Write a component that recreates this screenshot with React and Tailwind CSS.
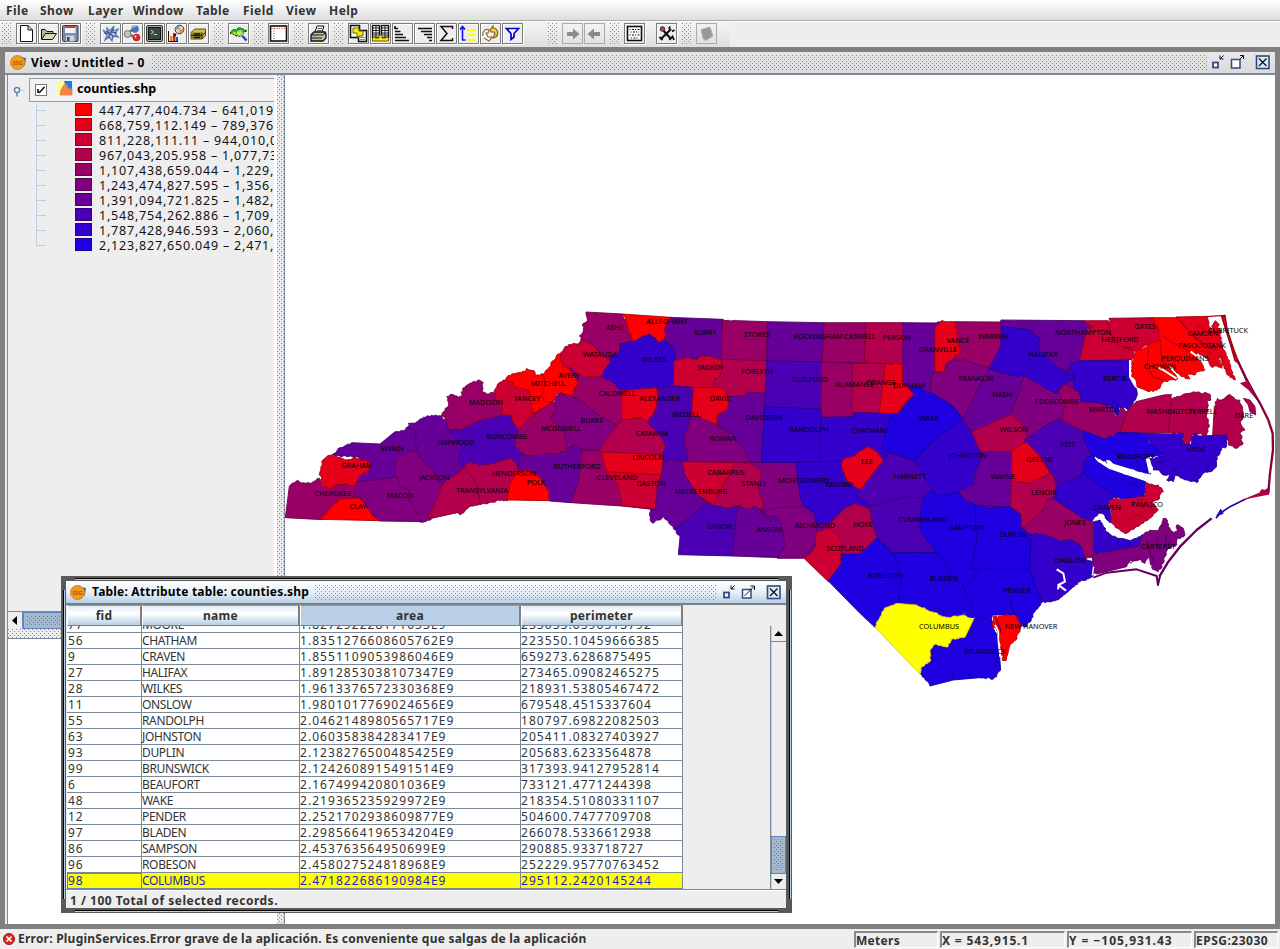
import React from "react";

const FONT = "font-['Noto_Sans',sans-serif]";
const DOTS =
  "bg-[conic-gradient(from_270deg_at_1px_1px,#8a8a8a_25%,transparent_0),conic-gradient(from_270deg_at_1px_1px,#8a8a8a_25%,transparent_0)] bg-[length:4px_4px] bg-[position:0_0,2px_2px]";
const BLUE_DOTS =
  "bg-[conic-gradient(from_270deg_at_1px_1px,#6382bf_25%,transparent_0),conic-gradient(from_270deg_at_1px_1px,#6382bf_25%,transparent_0)] bg-[length:4px_4px] bg-[position:0_0,2px_2px]";

/* ---------- map data: coordinates are in thirds of a pixel, one block per 250px wide column ---------- */
const FILL = ["#ff0000", "#e6001a", "#cc0033", "#b3004c", "#990066", "#800080", "#660099", "#4c00b3", "#3300cc", "#1f00e0", "#ffff00"];
const LINE = ["#a80000", "#98000f", "#8a0022", "#770033", "#660044", "#550055", "#440066", "#330077", "#220088", "#120096", "#d0c800"];

const COUNTIES = [
  // column 0
  [0, 6, "155,466 180,443 215,428 300,432 345,395 370,392 385,380 408,385 405,410 412,450 380,470 355,490 352,530 300,542 233,546 225,530 260,508 262,487 230,470 200,470"],
  [0, 4, "16,653 28,558 52,541 62,549 95,549 118,535 130,560 218,550 235,558 232,600 180,605 150,630 126,659"],
  [0, 1, "120,515 128,480 150,466 175,472 200,480 230,475 265,485 272,492 268,508 245,525 232,535 232,555 215,556 185,552 160,560 145,565 128,555 125,535 118,525"],
  [0, 6, "385,380 385,370 405,370 430,352 455,346 485,348 500,365 508,390 550,440 540,480 555,500 520,530 492,555 465,525 435,495 415,465 405,430 410,395"],
  [0, 5, "345,478 380,460 400,452 415,460 435,490 460,515 478,545 494,552 475,590 468,615 448,645 455,657 425,667 408,660 380,600 375,570 350,558 346,530 348,500"],
  [0, 5, "230,545 300,538 352,530 360,560 388,570 390,600 408,630 425,665 297,663 262,625 245,594 220,590"],
  [0, 0, "122,658 150,627 180,597 240,594 262,625 295,662"],
  [0, 7, "508,390 540,388 580,372 640,345 690,340 700,370 722,388 720,415 715,435 740,458 732,470 724,485 710,495 690,480 640,495 605,500 570,490 552,500 535,480 545,440"],
  [0, 4, "485,348 490,335 505,318 500,290 515,283 535,292 545,290 548,265 570,250 598,240 610,248 605,275 620,282 648,275 660,300 670,330 670,345 600,362 545,388 508,390 497,360"],
  [0, 2, "642,275 655,250 680,235 710,258 750,265 750,285 765,340 752,355 735,375 715,390 700,370 692,345 668,345 665,320 650,300"],
  [0, 3, "490,550 520,530 552,503 580,530 595,550 602,610 575,618 555,632 540,645 532,638 450,656 445,645 470,600 475,580"],
  [0, 3, "552,500 570,486 605,496 640,490 690,475 710,490 720,515 695,545 683,602 665,600 650,602 620,612 600,614 590,550"],
  // column 1
  [1, 6, "-38,465 0,465 45,460 60,462 110,450 135,435 158,450 155,500 150,540 123,608 58,603 58,575 -10,510 -38,510 -30,490"],
  [0, 0, "712,515 730,512 750,512 778,530 808,578 808,602 680,600 690,550"],
  [1, 0, "-72,235 -55,222 -15,215 -10,205 5,211 12,212 16,228 40,222 48,250 45,290 55,303 70,300 60,318 30,328 8,342 6,300 -5,270 -40,262"],
  [1, 4, "-42,415 -35,390 8,345 70,305 92,320 88,340 68,352 85,372 105,395 115,447 85,462 50,460 0,468 -20,460 -45,440"],
  [1, 4, "155,452 213,450 235,515 240,525 265,550 275,575 273,618 123,608 145,545 150,500"],
  [1, 2, "232,510 395,520 388,545 378,628 273,618 270,580 262,550 240,535"],
  [1, 1, "213,450 400,460 395,525 230,515"],
  [1, 5, "85,278 120,286 150,300 200,340 265,376 245,400 212,453 175,450 150,445 135,435 110,447 105,400 60,352 80,335 72,300"],
  [1, 4, "145,222 212,225 250,240 280,268 280,360 262,376 250,370 200,340 150,300 122,285 143,245"],
  [1, 0, "40,222 55,205 80,165 92,160 98,190 115,205 125,220 145,245 125,285 110,285 90,275 75,290 68,305 45,305 35,290 45,255"],
  [1, 2, "92,158 105,140 130,130 148,135 152,118 175,120 195,135 205,150 240,180 245,190 215,230 180,230 145,226 125,205 100,200 92,180"],
  [1, 4, "168,36 278,42 295,75 314,125 275,132 270,155 240,180 200,150 190,135 155,118 148,108 158,98 160,70 172,62"],
  [1, 6, "415,52 578,58 576,180 540,172 525,180 500,175 470,177 432,188 425,145 400,120 398,88"],
  [1, 0, "278,42 422,52 402,85 408,105 388,132 360,106 340,109 310,129 295,85"],
  [1, 8, "270,130 310,125 340,108 360,103 388,128 405,120 432,145 434,185 430,260 380,268 275,275 250,245 212,230 240,190 240,175 270,155"],
  [1, 4, "578,58 625,62 712,65 712,182 573,180"],
  [1, 3, "573,178 712,182 705,285 650,280 648,290 600,295 585,275 552,262 552,240 570,225"],
  [1, 2, "432,185 470,172 500,180 515,170 540,168 573,180 577,205 570,230 552,240 550,264 430,260"],
  [1, 3, "275,360 335,352 352,365 390,400 412,440 408,465 213,455 207,453 240,400 262,376"],
  [1, 7, "380,263 430,258 490,262 490,300 490,345 483,370 467,410 473,445 477,482 440,482 420,478 400,492 400,460 410,440 390,405 352,367 375,330 387,295"],
  [1, 1, "275,272 380,263 385,290 375,330 352,367 335,352 275,360"],
  [1, 6, "597,290 650,287 652,276 705,280 702,330 698,487 650,487 640,455 605,415 595,400 565,385 555,360 585,330"],
  [1, 1, "490,262 552,262 570,262 585,270 595,300 590,330 560,350 560,378 530,368 485,350"],
  [1, 5, "485,348 530,360 555,375 605,400 615,415 640,445 658,487 473,485 468,445 462,410 478,370"],
  [1, 5, "655,487 797,487 815,555 825,595 805,625 780,625 700,642 690,625 690,600 680,570 685,535 680,510"],
  [1, 3, "615,488 658,488 690,510 692,535 685,570 700,600 697,632 678,624 650,632 628,616 610,624 585,626 545,615"],
  [1, 2, "455,485 618,488 548,614 500,584 462,535"],
  [1, 6, "400,490 420,478 458,487 464,525 500,580 532,610 490,642 435,690 402,650 370,670 360,660 362,630 378,628 380,580 385,545 395,525"],
  [1, 7, "435,688 490,642 530,608 548,615 590,625 624,618 609,768 445,764 450,712"],
  // column 2
  [2, 5, "-60,635 0,622 35,620 80,622 112,640 116,670 110,700 100,740 75,775 -8,775 5,735 -5,680 -20,650"],
  [1, 6, "622,618 650,630 678,620 700,640 715,655 740,648 755,675 765,735 745,773 607,768"],
  [2, 6, "-38,65 132,68 129,188 -40,184"],
  [2, 7, "-40,182 127,186 124,329 -46,320"],
  [2, 4, "132,68 257,68 255,189 127,187"],
  [2, 3, "257,68 371,68 370,192 253,188"],
  [2, 6, "369,68 470,70 484,62 468,85 468,215 458,245 456,278 400,266 368,262"],
  [2, 4, "523,65 664,66 665,140 636,204 600,204 540,185 525,180 535,160 530,110"],
  [2, 5, "460,215 492,215 505,190 530,180 560,182 600,198 630,203 605,255 552,358 530,334 500,309 452,279 452,245"],
  [2, 1, "482,65 525,65 532,110 540,160 500,190 492,215 470,218 464,210 465,85"],
  [2, 4, "125,187 219,189 217,345 222,352 122,352"],
  [2, 3, "217,189 319,191 300,342 222,342 215,330"],
  [2, 8, "-46,320 124,327 120,487 -56,487"],
  [2, 8, "122,352 222,350 225,338 336,340 309,447 332,460 314,482 262,450 240,460 235,475 190,488 118,485"],
  [2, 8, "47,487 188,483 198,510 210,545 245,570 232,585 272,615 255,626 220,614 190,634 145,672 105,669 104,640 74,620 60,590"],
  [2, 7, "268,612 310,605 370,586 435,592 428,640 426,690 470,757 335,758 320,740 290,715 272,650"],
  [2, 7, "328,458 407,482 460,555 460,568 430,595 372,591 310,609 268,617 228,585 240,570"],
  [2, 1, "190,480 230,462 262,438 290,455 310,480 240,570 205,545 185,500"],
  [2, 8, "403,482 480,405 548,358 565,385 584,400 600,450 610,470 590,520 588,552 540,578 475,592 453,562"],
  [2, 9, "335,340 360,335 400,290 385,260 410,262 452,278 500,305 530,330 548,360 480,405 403,482 305,447"],
  [2, 1, "317,191 368,191 368,258 385,260 400,285 365,320 355,340 297,340"],
  [2, 6, "627,203 660,220 738,226 728,270 702,345 575,397 548,360 600,255"],
  [2, 6, "600,453 697,453 694,622 620,617 585,617 550,602 535,573 583,552 585,520 605,470"],
  [2, 3, "268,625 272,650 290,715 240,764 185,764 180,730 150,690 145,675 190,630 220,610"],
  [2, 2, "145,683 175,705 185,730 182,765 185,790 150,840 145,845 72,775 95,755 108,735 108,700"],
  // column 3
  [3, 6, "-87,60 160,62 192,80 175,90 152,182 120,200 115,212 78,205 20,155 25,118 0,95 -86,80"],
  [3, 5, "-15,222 0,230 80,275 90,270 109,310 102,360 60,372 0,412 -6,415 -40,375 -58,340 -30,270"],
  [3, 8, "-86,78 0,90 30,115 25,150 80,200 135,230 95,255 80,282 0,237 -15,227 -40,230 -123,205 -88,140"],
  [3, 3, "-175,395 -55,342 -30,365 -5,415 -50,456 -150,453"],
  [3, 7, "98,358 140,373 164,395 169,420 187,465 164,500 155,530 110,552 85,557 65,522 50,490 -8,445 -15,417 0,410 60,368"],
  [3, 1, "-55,453 -12,425 30,470 60,520 30,538 -5,552 -55,545"],
  [3, 3, "-57,543 -5,550 30,535 65,520 78,555 78,592 54,600 49,627 0,677 -25,688 -30,640 -58,622"],
  [3, 4, "50,597 70,592 160,650 187,660 189,758 205,755 210,765 165,778 155,745 120,722 95,729 45,709 0,704 -28,690 45,625"],
  [3, 2, "160,62 235,62 250,90 270,130 310,150 313,158 305,182 148,184 170,90 190,82"],
  [3, 2, "237,55 370,53 385,85 395,122 355,135 318,155 265,135 238,95"],
  [3, 4, "105,255 145,270 155,303 210,306 250,330 260,350 272,320 292,335 288,365 272,399 225,420 160,394 96,360 103,310 85,272"],
  [3, 8, "148,182 302,180 300,230 320,270 318,295 295,330 285,322 270,322 262,350 250,325 210,308 155,305 145,272 135,272 130,245 135,225 115,210 120,195"],
  [3, 3, "292,332 318,305 400,285 425,283 427,310 417,398 270,397"],
  [3, 3, "425,298 460,283 500,277 540,283 543,300 530,300 535,330 530,345 538,375 530,405 490,400 480,435 455,435 460,400 415,398"],
  [3, 3, "553,320 562,295 575,300 590,288 600,283 615,300 630,300 640,350 632,370 645,390 630,400 640,430 620,445 595,435 590,408 548,405"],
  [3, 8, "345,400 430,402 460,400 455,435 480,435 490,400 505,408 590,405 590,440 575,445 570,460 560,470 560,495 545,515 520,520 500,548 470,540 435,525 430,545 410,540 420,522 400,525 385,510 370,510 360,475 395,472 395,460 370,445"],
  [3, 9, "160,392 225,418 270,397 345,400 355,425 395,460 395,472 375,468 350,475 355,500 362,522 330,515 300,505 250,490 240,480 215,482 185,465 165,425"],
  [3, 9, "160,495 175,470 190,467 210,490 250,508 290,525 347,545 345,590 270,597 240,580 160,525"],
  [3, 8, "78,560 125,540 160,522 258,592 235,605 245,660 240,668 215,640 205,640 185,662 160,655 70,595"],
  [3, 8, "190,665 210,660 230,695 265,715 320,715 335,705 338,720 325,740 270,755 190,758"],
  [3, 2, "347,550 365,552 385,555 400,575 388,588 385,600 365,605 385,630 360,655 330,675 290,700 275,695 245,670 245,640 235,610 260,590 270,600 345,588"],
  [3, 5, "187,765 200,762 325,738 335,705 360,690 385,692 400,655 412,660 415,680 430,700 440,695 440,675 460,685 465,705 440,720 440,735 415,745 405,770 400,790 385,815 368,808 355,775 345,790 330,780 300,782 290,800 200,822 190,820"],
  [3, 8, "0,703 45,705 95,725 120,718 155,740 165,775 187,785 188,830 150,845 110,878 80,900 45,908 30,905 -5,810"],
  [3, 1, "438,51 533,49 536,78 552,90 572,93 572,120 582,150 592,170 602,200 616,240 592,225 578,195 566,165 575,205 560,198 545,202 530,175 505,160 485,155 460,110"],
  [3, 0, "365,53 440,53 475,90 500,120 545,160 500,150 500,165 512,180 525,210 505,215 490,225 475,220 480,237 455,230 430,205 395,185 390,122 385,85"],
  [3, 0, "355,133 390,122 395,180 420,205 443,237 400,245 390,265 370,275 345,270 320,260 318,240 305,230 305,190 318,155 340,145"],
  // southern block
  [2, 9, "430,592 455,565 475,590 535,575 550,600 590,615 590,710 578,805 603,810 558,872 500,800 468,757 420,690 422,640"],
  [2, 9, "585,615 630,625 690,620 722,645 722,685 752,703 750,810 640,809 573,807 590,730"],
  [2, 9, "600,808 748,808 785,905 765,935 740,980 725,975 705,945 640,945 635,960 600,955 545,950 576,915 553,890 553,870"],
  [2, 9, "335,758 470,757 500,800 530,835 555,870 557,890 578,915 545,952 500,956 440,930 410,917 350,913 347,880 360,825 342,780"],
  [2, 9, "290,715 320,740 340,765 355,805 367,825 355,900 350,913 320,922 300,950 285,982 240,940 145,843 185,790 185,762 240,762"],
  [2, 9, "580,960 600,952 635,960 645,995 655,1020 662,1110 655,1115 650,1130 640,1137 600,1133 520,1140 450,1158 422,1122 425,1100 450,1085 452,1050 465,1032 500,1042 515,1018 555,1012"],
  [2, 10, "350,910 410,915 455,935 500,952 550,945 580,960 555,1012 515,1018 500,1042 465,1032 450,1050 450,1085 425,1100 420,1122 285,982 300,950 318,922"],
  [2, 0, "640,950 665,948 705,945 725,980 715,1000 708,1020 690,1035 685,1055 678,1082 668,1082 662,1040 655,1010 650,990 636,975"],
];

const SILHOUETTE = [
  [6, "130,560 300,432 510,360 700,300 830,330 860,170 930,90 1500,70 2400,66 2550,180 2500,260 2420,560 2420,670 2280,880 2100,930 1880,900 1760,830 1600,770 1250,765 1200,640 880,600 700,590 300,655 150,655"],
];

function rough(points, shift) {
  const p = points.split(" ").map((s) => s.split(",").map(Number)).map(([x, y]) => [x + shift, y]);
  const out = [];
  p.forEach((a, i) => {
    const b = p[(i + 1) % p.length];
    const dx = b[0] - a[0];
    const dy = b[1] - a[1];
    const len = Math.hypot(dx, dy);
    out.push(a);
    if (len > 8 && len < 52) {
      const n = Math.max(2, Math.round(len / 6));
      for (let k = 1; k < n; k++) {
        const x = a[0] + (dx * k) / n;
        const y = a[1] + (dy * k) / n;
        const h = Math.sin(Math.round(x / 4) * 12.9898 + Math.round(y / 4) * 78.233) * 43758.5453;
        const r = (h - Math.floor(h) - 0.5) * 6;
        out.push([x - (dy / len) * r, y + (dx / len) * r]);
      }
    }
  });
  return out.map(([x, y]) => x.toFixed(1) + "," + y.toFixed(1)).join(" ");
}

const LABELS = [
  ["CHEROKEE", 333, 496], ["GRAHAM", 357, 468], ["CLAY", 358, 509], ["SWAIN", 392, 451], ["MACON", 400, 498], ["JACKSON", 434, 480],
  ["HAYWOOD", 456, 445], ["MADISON", 486, 405], ["BUNCOMBE", 507, 439], ["HENDERSON", 514, 476], ["TRANSYLVANIA", 482, 493], ["POLK", 536, 485],
  ["YANCEY", 527, 401], ["MITCHELL", 548, 386], ["AVERY", 569, 378], ["WATAUGA", 600, 357], ["ASHE", 615, 330], ["ALLEGHANY", 667, 324],
  ["SURRY", 705, 335], ["WILKES", 654, 362], ["STOKES", 757, 337], ["YADKIN", 710, 370], ["FORSYTH", 757, 374], ["CALDWELL", 617, 396],
  ["ALEXANDER", 660, 401], ["DAVIE", 720, 401], ["BURKE", 592, 423], ["IREDELL", 686, 417], ["MCDOWELL", 561, 431], ["CATAWBA", 652, 436],
  ["ROWAN", 723, 441], ["DAVIDSON", 764, 420], ["RUTHERFORD", 577, 469], ["LINCOLN", 648, 460], ["CLEVELAND", 617, 480], ["GASTON", 651, 486],
  ["CABARRUS", 726, 475], ["STANLY", 754, 486], ["MECKLENBURG", 701, 494], ["UNION", 720, 529], ["ANSON", 769, 532], ["ROCKINGHAM", 818, 339],
  ["CASWELL", 860, 339], ["PERSON", 897, 340], ["GRANVILLE", 938, 352], ["VANCE", 958, 343], ["WARREN", 993, 339], ["GUILFORD", 810, 382],
  ["ALAMANCE", 855, 387], ["ORANGE", 881, 385], ["DURHAM", 909, 388], ["FRANKLIN", 976, 381], ["NASH", 1002, 397], ["RANDOLPH", 809, 432],
  ["CHATHAM", 869, 433], ["WAKE", 929, 421], ["WILSON", 1014, 432], ["JOHNSTON", 968, 458], ["LEE", 867, 464], ["MONTGOMERY", 804, 483],
  ["MOORE", 839, 487], ["HARNETT", 910, 479], ["WAYNE", 1003, 479], ["RICHMOND", 815, 528], ["HOKE", 863, 527], ["CUMBERLAND", 923, 522],
  ["SAMPSON", 967, 530], ["DUPLIN", 1013, 537], ["SCOTLAND", 845, 551], ["ROBESON", 885, 578], ["BLADEN", 944, 581], ["PENDER", 1017, 593],
  ["COLUMBUS", 939, 629], ["BRUNSWICK", 985, 654], ["NEW HANOVER", 1031, 629], ["ONSLOW", 1070, 563], ["NORTHAMPTON", 1083, 335],
  ["HERTFORD", 1120, 342], ["GATES", 1145, 329], ["HALIFAX", 1043, 357], ["BERTIE", 1115, 381], ["CHOWAN", 1160, 369], ["PERQUIMANS", 1185, 361],
  ["PASQUOTANK", 1202, 348], ["CAMDEN", 1203, 336], ["CURRITUCK", 1228, 333], ["EDGECOMBE", 1057, 404], ["MARTIN", 1103, 412],
  ["WASHINGTON", 1171, 414], ["TYRRELL", 1203, 414], ["DARE", 1244, 418], ["PITT", 1068, 447], ["GREENE", 1040, 462], ["BEAUFORT", 1136, 459],
  ["HYDE", 1196, 452], ["LENOIR", 1044, 495], ["CRAVEN", 1107, 510], ["PAMLICO", 1147, 507], ["JONES", 1075, 525], ["CARTERET", 1158, 549],
];

function CountyMap() {
  return (
    <svg className="block" width="989" height="848" viewBox="285 75 989 848">
      <g transform="translate(280 300) scale(0.33333)" strokeWidth="2.6">
        {SILHOUETTE.map(([c, pts]) => (
          <polygon key={c} points={pts} fill={FILL[c]} />
        ))}
        {COUNTIES.map(([col, c, pts], i) => (
          <polygon key={i} points={rough(pts, col * 750)} fill={FILL[c]} stroke={LINE[c]} />
        ))}
        <g transform="translate(2250 0)" fill="none" strokeLinejoin="round">
          <path d="M528 50L585 46" stroke="#b80018" strokeWidth="4" />
          <path d="M575 50L585 46L592 90L612 150L627 190L615 182L600 130Z" fill="#e6001a" stroke="#98000f" strokeWidth="4" />
          <path d="M545 80L556 62L568 74L562 82L574 92L560 100Z" fill="#e6001a" stroke="#98000f" />
          <path d="M622 180L650 240L690 310L715 360L728 400L729 450L720 520L715 580" stroke="#8a0038" strokeWidth="7" />
          <path d="M628 190L645 225L665 262L682 300L655 268L632 250L650 245Z" fill="#b3004c" stroke="#770033" />
          <path d="M640 295L660 300L675 320L677 345L660 335L655 315Z" fill="#b3004c" stroke="#770033" />
          <path d="M715 584L716 565L705 572L695 570L690 579L645 598" fill="#b3004c" stroke="#a00044" strokeWidth="4" />
          <path d="M645 598L600 620L570 640L558 655" stroke="#2200aa" strokeWidth="5" />
          <path d="M572 628L560 648L580 640Z" fill="#3300cc" stroke="#2200aa" />
          <path d="M545 655L500 690L450 740L415 785L388 830" stroke="#600060" strokeWidth="7" />
          <path d="M190 833L230 818L320 808L380 828L384 855L390 828" fill="none" stroke="#600060" strokeWidth="6" />
          <g stroke="#fff" strokeWidth="6">
            <path d="M300 180L300 230L318 262" />
            <path d="M205 480L240 503L290 520L355 540" strokeWidth="9" />
            <path d="M210 643L230 680L265 705L300 716L330 700" strokeWidth="9" />
            <path d="M440 236L400 210L385 202M350 475L360 520" />
            <path d="M482 155L500 168L512 180" />
            <path d="M80 808L100 820L105 845L85 855L108 872M86 855L84 868" strokeWidth="6" />
            <path d="M300 800L330 782L340 800M355 775L360 805" strokeWidth="4" />
            <path d="M191 800L187 826" strokeWidth="4" />
          </g>
          <g stroke="#a00022" strokeWidth="3">
            <path d="M240 130L265 125L290 140L310 152M280 145L305 140M480 100L530 140L555 150M500 75L540 100M438 53L470 85L520 130L560 150M355 150L352 200L370 232L400 240M395 105L430 130L480 155" />
            <path d="M330 625L355 615L375 640M290 660L320 645L350 655M320 600L350 600M440 310L455 330M520 290L500 300M580 300L600 295L612 305" />
          </g>
          <g stroke="#130088" strokeWidth="3">
            <path d="M290 560L300 545L325 560M315 570L330 560M380 490L420 480M430 515L450 490M490 530L505 510M530 510L540 490M180 625L215 640M265 720L260 735M300 725L300 740M245 300L265 315L262 345" />
            <path d="M-60 900L-52 930L-45 945M330 500L320 480M230 490L225 478" />
          </g>
          <g stroke="#4a004a" strokeWidth="3">
            <path d="M350 720L360 760L375 790M380 710L385 750M410 700L405 740M430 715L415 730M300 790L330 770" />
          </g>
        </g>
        <g transform="translate(1500 600)" fill="none">
          <path d="M645 375L655 395L655 420L660 470" stroke="#fff" strokeWidth="5" />
          <path d="M650 358L665 400M515 540L520 520M570 535L565 520M655 460L645 500M692 300L695 325L705 340" stroke="#130088" strokeWidth="3" />
        </g>
      </g>
      <g className="font-['Noto_Sans',sans-serif]" fontSize="7.3" fill="#000" textAnchor="middle">
        {LABELS.map(([t, x, y]) => (
          <text key={t} x={x} y={y}>{t}</text>
        ))}
      </g>
    </svg>
  );
}

/* ---------- toolbar ---------- */
const K = "#111";
const ICONS = {
  new: <path d="M3.500 1.500H11L15.500 6V17.500H3.500ZM11 1.500V6H15.500" fill="#fff" stroke={K} />,
  open: <><path d="M2.500 15V5.500H6L8 7.500H14V9.500" fill="#b4b498" stroke={K} /><path d="M2.500 15.500L6.500 9.500H17.500L13.500 15.500Z" fill="#d8d8b8" stroke={K} /></>,
  save: <><rect x="1.500" y="1.500" width="15.500" height="16" rx="1" fill="#7590b0" stroke="#333a48" /><rect x="4" y="2" width="10.500" height="7" fill="#f4f4f4" /><rect x="4" y="2" width="10.500" height="2" fill="#d04030" /><rect x="5" y="11.500" width="8.500" height="6" fill="#d0d4da" /><rect x="6" y="13" width="2.500" height="4" fill="#444" /></>,
  gears: <g stroke="#5a78b0" fill="none"><path d="M2 6L6 9L6 4L9 7L13 2L12 7L17 5L14 10L17 13L12 12L11 17L8 13L4 16L6 11Z" fill="#b9c8e4" strokeWidth="1.300" /><path d="M6 7L13 13M12 5L7 14M3 9L8 10M10 8L16 9" stroke="#35528c" strokeWidth="1.200" /></g>,
  balls: <><path d="M5 9L12 4M5 9L12 14" stroke="#777" strokeWidth="2.500" /><circle cx="4.500" cy="10" r="3.500" fill="#c4c4c4" stroke="#777" /><circle cx="12" cy="5" r="3.800" fill="#4a72b4" /><path d="M9 4L12 1.500L13 3" stroke="#dde" fill="none" /><circle cx="13.500" cy="13.500" r="3.800" fill="#e02222" /><circle cx="12.500" cy="12.500" r="1" fill="#fff" /></>,
  term: <><rect x="1.500" y="1.500" width="16" height="16" rx="1.500" fill="#a9aca4" stroke="#333" /><rect x="3.500" y="3.500" width="12" height="12" fill="#3a4a3a" stroke="#111" /><path d="M6 6L8.500 8L6 10M9 10.500H12" stroke="#cfd8cf" fill="none" /></>,
  chart: <><path d="M1.500 7V17.500H11" stroke={K} fill="none" /><rect x="3" y="12" width="2.500" height="5" fill="#f58220" /><rect x="6" y="9" width="2.500" height="8" fill="#e02222" /><rect x="9" y="13" width="2" height="4" fill="#3050c0" /><circle cx="12.500" cy="5.500" r="4.300" fill="#f2d8a8" stroke="#332" /><path d="M12.500 5.500V1.500A4 4 0 0 0 8.500 5.500Z" fill="#7a9cc8" /><path d="M12.500 5.500H16.500A4 4 0 0 1 12.500 9.500Z" fill="#e88040" /><path d="M9 10L7 12.500" stroke={K} strokeWidth="1.500" /></>,
  drawer: <><path d="M2 8.500L6 5H16.500V12L13 15H2Z" fill="#c8c040" stroke="#55501a" /><path d="M2.500 8.500H13V15H2.500Z" fill="#8a8020" /><path d="M2 11.500H13L16.500 8.500M13 8.500V15" stroke="#222" fill="none" /><path d="M5 10H11M5 13.500H11" stroke="#111" strokeWidth="1.500" /></>,
  search: <><path d="M1 9L4 5.500L7 6L10 3.500L14 5L18 7L14 8L12 12L7 12L4 10Z" fill="#16d016" stroke="#111" strokeDasharray="2 1" /><path d="M3 8.500H13L11 10.500H6Z" fill="#f0f030" /><circle cx="11" cy="9" r="3.600" fill="#e0f080" fillOpacity=".6" stroke="#444" strokeDasharray="1.500 1" /><path d="M13.500 12L17.500 16.500" stroke="#1c48c8" strokeWidth="2.500" /></>,
  frame: <><rect x="1.500" y="2" width="16" height="15" fill="#fff" stroke={K} strokeWidth="1.600" /><path d="M5 4V16M2.500 4.500H16" stroke="#c03030" strokeDasharray="1 1.500" /></>,
  print: <><path d="M6 8L8 2H15L13 8" fill="#fff" stroke={K} /><path d="M2 11L5 8H16L17 10V14L14 17H2Z" fill="#bbb" stroke={K} strokeWidth="1.300" /><path d="M2 11H13.500L17 8.500M2 14H13" stroke={K} fill="none" /><path d="M9 12.500H12" stroke="#e0d020" strokeWidth="1.500" /><path d="M8.500 4.500H13M8 6.500H12.500" stroke="#555" /></>,
  link: <><rect x="1.500" y="1.500" width="9" height="12" fill="#fff" stroke={K} strokeWidth="1.600" /><rect x="9.500" y="6.500" width="8" height="11" fill="#fff" stroke={K} strokeWidth="1.600" /><path d="M11.500 13.500H16M11.500 15.500H16" stroke={K} strokeDasharray="1 1" /><path d="M4 4H10V7H14V12H10V13H8V9H4Z" fill="#f4ec10" stroke="#686000" /></>,
  join: <><rect x="1.500" y="1.500" width="7" height="12" fill="#fff" stroke={K} strokeWidth="1.400" /><rect x="10.500" y="1.500" width="7" height="12" fill="#fff" stroke={K} strokeWidth="1.400" /><path d="M5 2V13M14 2V13M2 4H8M2 6.500H8M2 9H8M2 11H8M11 4H17M11 6.500H17M11 9H17M11 11H17" stroke={K} strokeWidth=".9" /><path d="M1.500 14.500L4 12V14H8V11H11V14H15V12L17.500 14.500V17H1.500Z" fill="#f4ec10" stroke="#686000" /></>,
  asc: <path d="M2 2V4.500H5M2 7.500H7.500M2 10.500H10M2 13.500H13M2 16.500H16" stroke={K} strokeWidth="1.700" fill="none" />,
  desc: <path d="M3 4.500H17M6 7.500H17M9 10.500H17M12 13.500H17M14 16.500H17" stroke={K} strokeWidth="1.700" />,
  sum: <path d="M15.500 5V2.500H4L10 9.500L4 16.500H15.500V14" stroke={K} fill="none" strokeWidth="1.500" />,
  up: <><path d="M3.500 16V3M1 5.500L3.500 2.500L6 5.500" stroke="#1010e8" fill="none" strokeWidth="1.600" /><path d="M8 6H17M8 11H16M8 16H17" stroke="#ffff00" strokeWidth="2" /><path d="M3 16H6.500" stroke="#1010e8" strokeWidth="1.500" /></>,
  rot: <g strokeWidth="1.200"><path d="M2 12C1 7 5 4 8 6L7 9L5 9L7 13H11L8 17L3 14" fill="#fff" stroke="#8c6a30" /><path d="M9 6L12 2V4C17 4 18 10 15 13L12 14L14 10L13 8H10Z" fill="#f0d040" stroke="#806020" /></g>,
  filter: <path d="M3.500 4.500H15.500L11 9.500V13L8 15.500V9.500Z" fill="#fff" stroke="#0000c8" strokeWidth="1.700" />,
  right: <path d="M4 8H10V4.500L16.500 10L10 15.500V12H4Z" fill="#8a8a8a" />,
  left: <path d="M15 8H9V4.500L2.500 10L9 15.500V12H15Z" fill="#8a8a8a" />,
  noise: <><rect x="2.500" y="2.500" width="14" height="14" fill="#fff" stroke={K} strokeWidth="1.600" /><path d="M4.500 5.500H15M5.500 8H14M4.500 11H15M6 14H14" stroke={K} strokeDasharray="1 1.500 2 1" /></>,
  tools: <><path d="M5 5L14 15M14 5L4 15" stroke={K} strokeWidth="2.200" /><circle cx="5.500" cy="5" r="2.300" fill="#c04040" stroke="#333" /><path d="M12 5L13 2.500M15 7.500L17.500 6M2.500 13L5.500 16M12.500 16L15.500 12.500L17 16" stroke={K} strokeWidth="1.900" fill="none" /></>,
  book: <path d="M4 5.500L13 3L16 12L9 16.500L6 14.500Z" fill="#999" stroke="#b4b4b4" />,
};

const TOOLBAR = ["|", "new", "open", "save", "|", "gears", "balls", "term", "chart", "drawer", "|", "search", "|", "frame", "|", "print", "|", "link", "join", "asc", "desc", "sum", "up", "rot", "filter", "20", "|", "right", "left", "|", "noise", "10", "tools", "|", "book"];

function Toolbar() {
  return (
    <div className="flex h-[26px] items-start border-t border-white bg-[#eee] pt-px">
      <div className="flex h-6 w-[730px] items-start bg-linear-to-b from-[#f4f4f4] to-[#dedede]">
        {TOOLBAR.map((t, i) => {
          if (t === "|") return <div key={i} className={`${DOTS} ${i === 0 ? "ml-0.5" : "ml-1"} mr-1 h-[22px] w-[10px] shrink-0`} />;
          if (t === "20") return <div key={i} className="w-5 shrink-0" />;
          if (t === "10") return <div key={i} className="w-2.5 shrink-0" />;
          const off = t === "right" || t === "left" || t === "book";
          return (
            <div key={i} className={`mr-px flex h-[21px] w-[21px] shrink-0 items-center justify-center border ${off ? "border-[#aaa]" : "border-[#7c7c7c] bg-[#eee] shadow-[1px_1px_0_#fff,inset_1px_1px_0_#fff]"}`}>
              <svg width="19" height="19" viewBox="0 0 19 19" className="shrink-0">{ICONS[t]}</svg>
            </div>
          );
        })}
      </div>
    </div>
  );
}

function Logo() {
  return (
    <svg width="17" height="17" viewBox="0 0 17 17" className="shrink-0">
      <path d="M11 3L16 4L15 11L12 13Z" fill="#2070b0" />
      <circle cx="7.500" cy="8.500" r="7" fill="#f39a1e" stroke="#e08010" />
      <text x="7.500" y="11" fontSize="6" textAnchor="middle" fill="#9a5a10" className="font-['Noto_Sans',sans-serif] font-bold">SIG</text>
    </svg>
  );
}

function WindowButtons({ diagonal }) {
  return (
    <svg width="60" height="17" viewBox="0 0 60 17" className="shrink-0">
      <rect x="3" y="8.500" width="5" height="5" fill="#fff" stroke="#2f4a86" strokeWidth="1.800" />
      <path d="M13.500 1.500L10 5M10 1.500V5H13.500" stroke={K} fill="none" />
      <rect x="21.500" y="5.500" width="8.500" height="8.500" fill="#fff" stroke="#2f4a86" strokeWidth="1.500" />
      {diagonal ? <path d="M23.500 12L33 2.500M29.500 2H33.500V6" stroke={K} fill="none" /> : <path d="M30 5L33.500 1.500M30 1.500H33.500V5" stroke={K} fill="none" />}
      <rect x="46.500" y="2" width="12.500" height="12.500" fill="#dce8f4" stroke="#2f4a86" strokeWidth="1.600" />
      <path d="M49 4.500L56.500 12M56.500 4.500L49 12" stroke={K} strokeWidth="1.300" />
    </svg>
  );
}

const LEGEND = [
  ["bg-[#ff0000] border-[#b20000]", "447,477,404.734 – 641,019,"],
  ["bg-[#e6001a] border-[#a00012]", "668,759,112.149 – 789,376,"],
  ["bg-[#cc0033] border-[#8e0024]", "811,228,111.11 – 944,010,0"],
  ["bg-[#b3004c] border-[#7c0035]", "967,043,205.958 – 1,077,73"],
  ["bg-[#990066] border-[#6b0047]", "1,107,438,659.044 – 1,229,"],
  ["bg-[#800080] border-[#590059]", "1,243,474,827.595 – 1,356,"],
  ["bg-[#660099] border-[#47006b]", "1,391,094,721.825 – 1,482,"],
  ["bg-[#4c00b3] border-[#35007d]", "1,548,754,262.886 – 1,709,"],
  ["bg-[#3300cc] border-[#24008e]", "1,787,428,946.593 – 2,060,"],
  ["bg-[#1f00e0] border-[#15009c]", "2,123,827,650.049 – 2,471,"],
];

function LayerTree() {
  return (
    <div className="flex w-[269px] shrink-0 flex-col border-l border-[#7a8a99]">
      <div className="h-[537px] overflow-hidden border-r-2 border-b border-r-white border-b-[#7a8a99] bg-[#eee] pt-[3px]">
        <div className="flex h-6 items-center">
          <svg width="21" height="24" viewBox="0 0 21 24" className="shrink-0">
            <path d="M12 12.500H17" stroke="#b8cfe5" />
            <circle cx="9" cy="12" r="2.500" fill="#fff" stroke="#6382bf" strokeWidth="1.500" />
            <path d="M9 14.500V18.500" stroke="#6382bf" strokeWidth="1.500" />
          </svg>
          <div className="flex h-6 w-[260px] shrink-0 items-center border border-r-0 border-[#999] bg-[#f2f2f2]">
            <svg width="50" height="22" viewBox="0 0 50 22" className="shrink-0">
              <rect x="5.500" y="5.500" width="11" height="11" fill="#fff" stroke="#777" />
              <path d="M8 10V14M9 14L14.500 8" stroke="#222" strokeWidth="1.800" fill="none" />
              <rect x="28" y="2" width="14" height="14" fill="#ffff80" />
              <path d="M34 2H42V16H38Z" fill="#0a80ff" />
              <path d="M30 16L31 11L34 6L37 5L38 9L42 10V16Z" fill="#ff8040" stroke="#888" strokeWidth=".7" />
              <rect x="30" y="15" width="12" height="1" fill="#ff8040" />
            </svg>
            <span className="-ml-[3px] -mt-0.5 text-[12.500px] font-bold whitespace-nowrap text-black">counties.shp</span>
          </div>
        </div>
        <div className="flex">
          <svg width="67" height="152" viewBox="0 0 67 152" className="shrink-0">
            <path d="M28.500 1V143.500M28.500 8.500H38M28.500 23.500H38M28.500 38.500H38M28.500 53.500H38M28.500 68.500H38M28.500 83.500H38M28.500 98.500H38M28.500 113.500H38M28.500 128.500H38M28.500 143.500H38" stroke="#b8cfe5" fill="none" />
          </svg>
          <div className="flex flex-col">
            {LEGEND.map(([c, t]) => (
              <div key={t} className="flex h-[15px] items-center gap-[7px]">
                <span className={`${c} h-[13px] w-[17px] shrink-0 border`} />
                <span className="pt-0.5 text-[12.500px] leading-[15px] tracking-[0.8px] whitespace-nowrap text-[#111]">{t}</span>
              </div>
            ))}
          </div>
        </div>
      </div>
      <div className="flex h-[17px] shrink-0 bg-[#eee]">
        <div className="flex w-[15px] items-center justify-center border-r border-[#6382bf]">
          <svg width="6" height="9" viewBox="0 0 6 9"><path d="M5 0V9L0 4.500Z" fill="#000" /></svg>
        </div>
        <div className="grow border border-[#6382bf] bg-[#a3b8cc] p-[3px]"><div className={`${BLUE_DOTS} h-full`} /></div>
      </div>
      <div className={`${DOTS} h-[9px] shrink-0 bg-[#eee]`} />
      <div className="grow border-t border-[#7a8a99] bg-white" />
    </div>
  );
}

const ROWS = [
  ["77", "MOORE", "1.827292228171053E9", "233033.0590513792"],
  ["56", "CHATHAM", "1.8351276608605762E9", "223550.10459666385"],
  ["9", "CRAVEN", "1.8551109053986046E9", "659273.6286875495"],
  ["27", "HALIFAX", "1.8912853038107347E9", "273465.09082465275"],
  ["28", "WILKES", "1.9613376572330368E9", "218931.53805467472"],
  ["11", "ONSLOW", "1.9801017769024656E9", "679548.4515337604"],
  ["55", "RANDOLPH", "2.0462148980565717E9", "180797.69822082503"],
  ["63", "JOHNSTON", "2.060358384283417E9", "205411.08327403927"],
  ["93", "DUPLIN", "2.1238276500485425E9", "205683.6233564878"],
  ["99", "BRUNSWICK", "2.1242608915491514E9", "317393.94127952814"],
  ["6", "BEAUFORT", "2.167499420801036E9", "733121.4771244398"],
  ["48", "WAKE", "2.219365235929972E9", "218354.51080331107"],
  ["12", "PENDER", "2.2521702938609877E9", "504600.7477709708"],
  ["97", "BLADEN", "2.2985664196534204E9", "266078.5336612938"],
  ["86", "SAMPSON", "2.453763564950699E9", "290885.933718727"],
  ["96", "ROBESON", "2.458027524818968E9", "252229.95770763452"],
  ["98", "COLUMBUS", "2.471822686190984E9", "295112.2420145244"],
];

function AttributeTable() {
  const cols = "grid grid-cols-[75px_158px_221px_162px]";
  const head = "flex items-center justify-center border-t border-r-2 border-b border-l border-t-[#999] border-r-[#7f7f7f] border-b-[#7f7f7f] border-l-white";
  const metal = "bg-linear-to-b from-[#e3ecf4] via-white via-40% to-[#b8cfe5]";
  const cell = "h-4 border-r border-b border-[#7a8a99] leading-[15px]";
  return (
    <div className="absolute top-[576px] left-[61px] flex h-[337px] w-[731px] flex-col border-[5px] border-r-[6px] border-[#595959] bg-[#eee]">
      <div className="absolute -top-[3px] right-[8px] left-[9px] h-[2px] border-t border-b border-t-black border-b-[#b8cfe5]" />
      <div className="absolute right-[8px] -bottom-[4px] left-[9px] h-[2px] border-t border-b border-t-black border-b-[#b8cfe5]" />
      <div className="absolute top-[9px] bottom-[9px] -left-[3px] w-[2px] border-r border-l border-l-black border-r-[#b8cfe5]" />
      <div className="absolute top-[9px] -right-[5px] bottom-[9px] w-[2px] border-r border-l border-l-black border-r-[#b8cfe5]" />
      <div className="flex h-[22px] shrink-0 items-center bg-linear-to-b from-white via-[#eaf1f7] to-[#b8cfe5] pl-1">
        <Logo />
        <span className="w-[228px] shrink-0 pl-[5px] text-[12px] font-bold tracking-[0.2px] whitespace-nowrap text-black">Table: Attribute table: counties.shp</span>
        <div className={`${DOTS} h-[15px] w-[402px] shrink-0`} />
        <div className="ml-[4px]"><WindowButtons diagonal /></div>
      </div>
      <div className="h-[2px] shrink-0 bg-[#7a8088]" />
      <div className={`${cols} h-[21px] w-[617px] shrink-0 pl-px text-[12px] leading-[16px] font-bold tracking-[0.3px] text-[#333]`}>
        <div className={`${head} ${metal}`}>fid</div>
        <div className={`${head} ${metal}`}>name</div>
        <div className={`${head} bg-[#b8cfe5]`}>area</div>
        <div className={`${head} ${metal}`}>perimeter</div>
      </div>
      <div className="flex h-[264px] shrink-0 border-b border-[#7a8a99]">
        <div className="flex w-[618px] flex-col justify-end overflow-hidden pl-px text-[12px] leading-[16px] text-[#333]">
          {ROWS.map((r, i) => (
            <div key={r[0]} className={`${cols} h-4 w-[616px] shrink-0 ${i === 16 ? "bg-[#ffff00] text-[#1a1ad0]" : "bg-white"}`}>
              {i === 16 ? (
                <div className="h-4 border border-[#6382bf] leading-[13px] tracking-[1px]">{r[0]}</div>
              ) : (
                <div className={`${cell} pl-px tracking-[1px]`}>{r[0]}</div>
              )}
              <div className={`${cell} tracking-[-0.35px]`}>{r[1]}</div>
              <div className={`${cell} tracking-[1.05px]`}>{r[2]}</div>
              <div className={`${cell} tracking-[1.05px]`}>{r[3]}</div>
            </div>
          ))}
        </div>
        <div className="ml-[86px] flex w-[16px] flex-col border-l border-[#7a8a99] shadow-[inset_1px_0_0_#b8cfe5]">
          <div className="flex h-4 items-center justify-center border-b border-[#7a8a99]">
            <svg width="9" height="5" viewBox="0 0 9 5"><path d="M0 5H9L4.500 0Z" fill="#000" /></svg>
          </div>
          <div className="grow" />
          <div className="h-[38px] border border-[#6382bf] bg-[#a3b8cc] p-[2px]"><div className={`${BLUE_DOTS} h-full`} /></div>
          <div className="flex h-[15px] items-center justify-center">
            <svg width="9" height="5" viewBox="0 0 9 5"><path d="M0 0H9L4.500 5Z" fill="#000" /></svg>
          </div>
        </div>
      </div>
      <div className="flex grow items-center border-t border-white pt-0.5 pl-1 text-[12px] leading-[15px] font-bold tracking-[0.5px] text-[#333]">1 / 100 Total of selected records.</div>
    </div>
  );
}

const MENU = [
  ["File", "w-[34px]"], ["Show", "w-[48px]"], ["Layer", "w-[45px]"], ["Window", "w-[63px]"], ["Table", "w-[47px]"], ["Field", "w-[43px]"], ["View", "w-[43px]"], ["Help", "w-[40px]"],
];

const STATUS = [
  ["Meters", "w-[84px] tracking-[0.3px]"], ["X = 543,915.1", "w-[125px] tracking-[0.85px]"], ["Y = −105,931.43", "w-[125px] tracking-[0.95px]"], ["EPSG:23030", "w-[84px] tracking-[0.5px]"],
];

export default function App() {
  return (
    <div className={`${FONT} relative flex h-[949px] w-[1280px] flex-col overflow-hidden bg-[#eee]`}>
      <div className="flex h-[21px] shrink-0 items-center border-b border-[#aaa] bg-linear-to-b from-white to-[#dedede] pt-[2px] pl-[6px] text-[12px] leading-[18px] font-bold tracking-[0.45px] text-[#333]">
        {MENU.map(([t, w]) => (
          <div key={t} className={w}>{t}</div>
        ))}
      </div>
      <Toolbar />
      <div className="flex h-[882px] shrink-0 flex-col border-[5px] border-[#808080] bg-[#eee]">
        <div className="flex h-[21px] shrink-0 items-center bg-linear-to-b from-[#e8e8e8] to-[#dadada] pl-[5px]">
          <Logo />
          <span className="w-[125px] shrink-0 pl-[4px] text-[12px] font-bold tracking-[0.38px] whitespace-nowrap text-black">View : Untitled – 0</span>
          <div className={`${DOTS} h-[15px] w-[1055px] shrink-0`} />
          <div className="ml-[3px]"><WindowButtons /></div>
        </div>
        <div className="h-[2px] shrink-0 bg-[#7a8a99]" />
        <div className="flex h-[849px] shrink-0 pl-0.5">
          <LayerTree />
          <div className={`${DOTS} w-2 shrink-0 border-l border-white bg-[#e8e8e8]`} />
          <div className="grow border-l border-[#7a8a99] bg-white"><CountyMap /></div>
        </div>
      </div>
      <div className="flex grow items-center text-[12px] font-bold text-[#333]">
        <div className="flex w-[854px] items-center gap-[3px] pl-[3px]">
          <svg width="12" height="12" viewBox="0 0 12 12"><circle cx="6" cy="6" r="5.500" fill="#d8281e" stroke="#a01810" /><path d="M3.500 3.500L8.500 8.500M8.500 3.500L3.500 8.500" stroke="#fff" strokeWidth="1.700" /></svg>
          <span className="tracking-[0.225px] whitespace-nowrap">Error: PluginServices.Error grave de la aplicación. Es conveniente que salgas de la aplicación</span>
        </div>
        <div className="flex gap-[2px]">
          {STATUS.map(([t, w]) => (
            <div key={t} className={`${w} h-[17px] border-t-2 border-r border-b border-l-2 border-t-[#8a8a8a] border-r-white border-b-white border-l-[#8a8a8a] leading-[16px] whitespace-nowrap`}>{t}</div>
          ))}
        </div>
      </div>
      <AttributeTable />
    </div>
  );
}
